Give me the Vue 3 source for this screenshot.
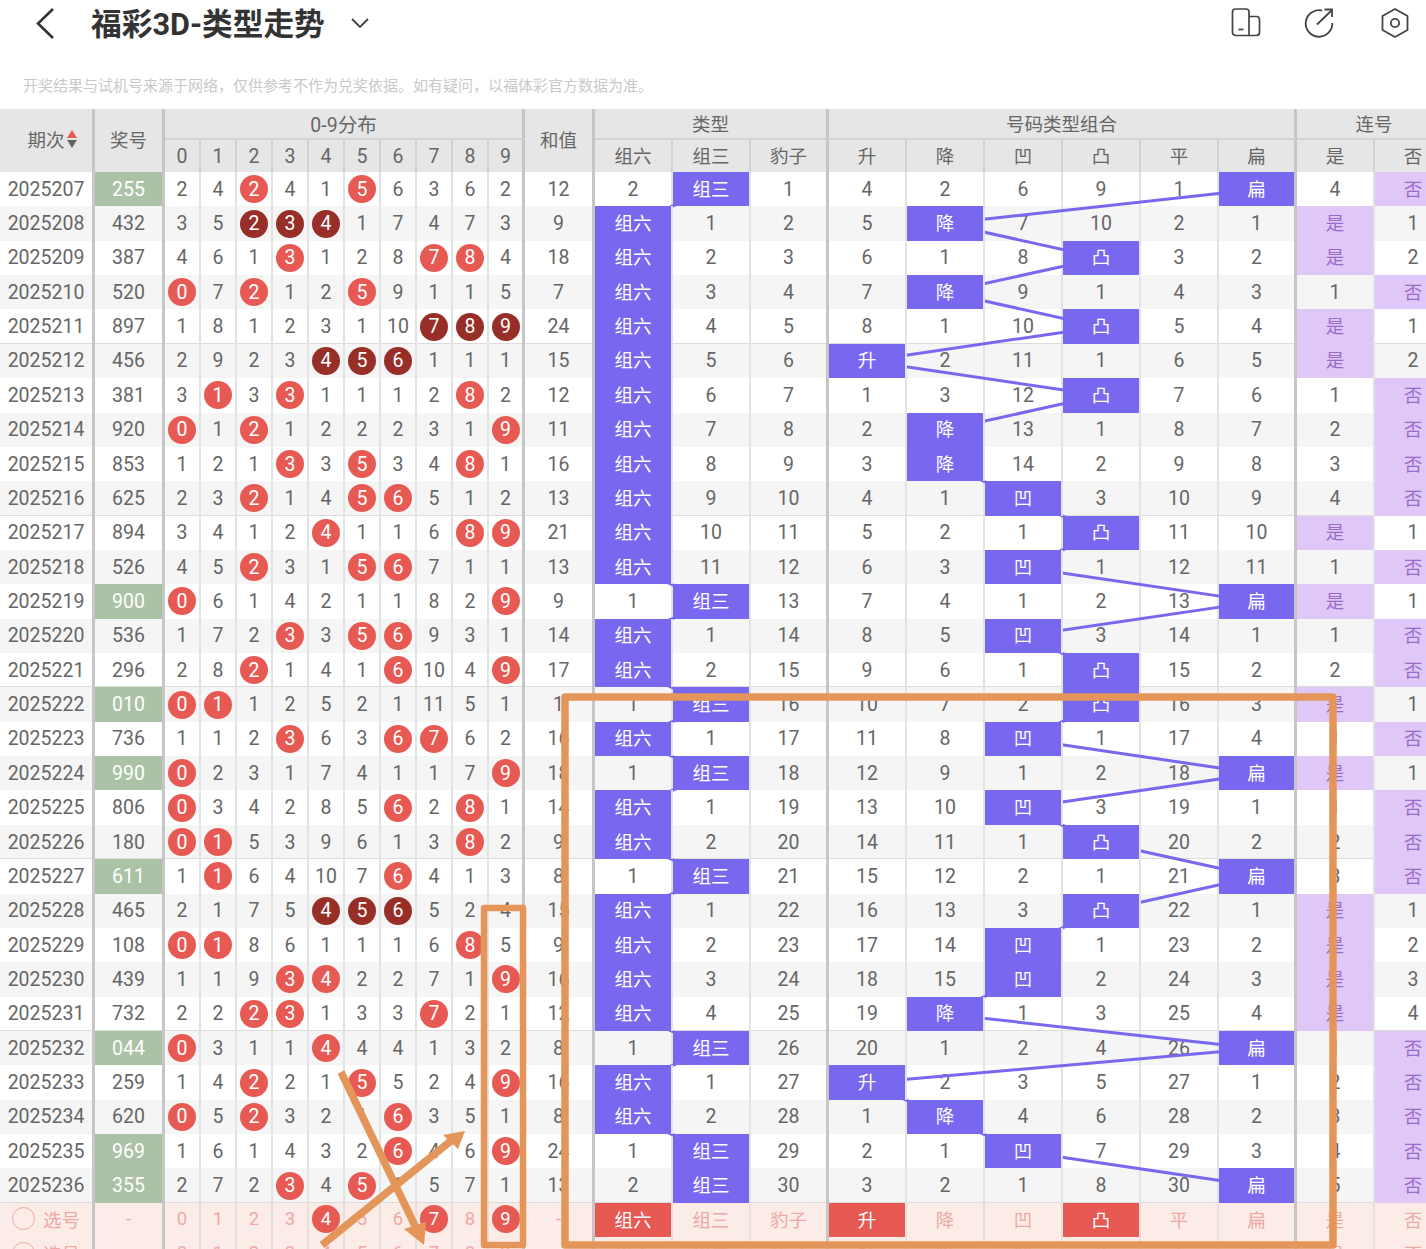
<script setup>
import { computed } from "vue";

const ROW_H = 34.37;
// 号码分布之后的几组列中心，画折线用
const TYPE_CX = [633, 711, 789];
const SHAPE_CX = [867, 945, 1023, 1101, 1179, 1257];

const draws = [
  "255", "432", "387", "520", "897", "456", "381", "920", "853", "625",
  "894", "526", "900", "536", "296", "010", "736", "990", "806", "180",
  "611", "465", "108", "439", "732", "044", "259", "620", "969", "355",
];

const typeNames = ["组六", "组三", "豹子"];
const shapeNames = ["升", "降", "凹", "凸", "平", "扁"];
const linkNames = ["是", "否"];

const typeOf = (d) => {
  const n = new Set(d).size;
  return n === 3 ? 0 : n === 2 ? 1 : 2;
};

const shapeOf = ([a, b, c]) => {
  if (a === b && b === c) return 4;
  if (a === b || b === c) return 5;
  if (a < b && b < c) return 0;
  if (a > b && b > c) return 1;
  return a > b ? 2 : 3;
};

const linkOf = ([a, b, c]) => {
  const near = (x, y) => [1, 9].includes(Math.abs(x - y));
  return near(a, b) || near(b, c) ? 0 : 1;
};

// 遗漏值一期一期往下累加
const step = (miss, hit) =>
  miss.map((m, i) => (i === hit ? 0 : m + 1));

const rows = computed(() => {
  let digitMiss = [1, 3, 0, 3, 0, 0, 5, 2, 5, 1];
  let typeMiss = [1, 0, 0];
  let shapeMiss = [3, 1, 5, 8, 0, 0];
  let linkMiss = [3, 0];

  return draws.map((prize, i) => {
    const nums = prize.split("").map(Number);
    const sorted = [...nums].sort((a, b) => a - b);
    const straight = sorted[1] === sorted[0] + 1 && sorted[2] === sorted[1] + 1;

    digitMiss = digitMiss.map((m, d) => (nums.includes(d) ? 0 : m + 1));
    const t = typeOf(nums);
    const s = shapeOf(nums);
    const l = linkOf(nums);
    typeMiss = step(typeMiss, t);
    shapeMiss = step(shapeMiss, s);
    linkMiss = step(linkMiss, l);

    return {
      period: 2025207 + i,
      prize,
      pair: t === 1,
      straight,
      digits: digitMiss.map((m, d) => ({ d, hit: nums.includes(d), text: nums.includes(d) ? d : m })),
      sum: nums.reduce((a, b) => a + b, 0),
      type: t,
      typeMiss: [...typeMiss],
      shape: s,
      shapeMiss: [...shapeMiss],
      link: l,
      linkMiss: [...linkMiss],
    };
  });
});

const polyline = (cols, key) =>
  rows.value
    .map((r, i) => `${cols[r[key]]},${(i + 0.5) * ROW_H}`)
    .join(" ");

const typeLine = computed(() => polyline(TYPE_CX, "type"));
const shapeLine = computed(() => polyline(SHAPE_CX, "shape"));

const pickRows = [
  { hits: [4, 7, 9], type: 0, shape: [0, 3] },
  { hits: [], type: -1, shape: [] },
];
</script>

<template>
  <div class="page">
    <header class="topbar">
      <svg class="back" width="24" height="32" viewBox="0 0 24 32">
        <path d="M20 2 L5 16.5 L20 31" fill="none" stroke="#333" stroke-width="2.6" />
      </svg>
      <h1 class="title">福彩3D-类型走势</h1>
      <svg class="caret" width="20" height="12" viewBox="0 0 20 12">
        <path d="M2 2 L10 10 L18 2" fill="none" stroke="#444" stroke-width="1.8" />
      </svg>
      <div class="actions">
        <svg width="30" height="30" viewBox="0 0 30 30">
          <path d="M18 27.5 H4.5 a3 3 0 0 1 -3 -3 V4 a3 3 0 0 1 3 -3 H15 a3 3 0 0 1 3 3 Z" fill="none" stroke="#444" stroke-width="1.7" />
          <path d="M18 8.5 H25.5 a3 3 0 0 1 3 3 V24.5 a3 3 0 0 1 -3 3 H18" fill="none" stroke="#444" stroke-width="1.7" />
          <path d="M7.5 21.5 H12.5" stroke="#444" stroke-width="1.7" />
        </svg>
        <svg width="30" height="32" viewBox="0 0 30 32">
          <path d="M18 3.5 A13.3 13.3 0 1 0 28.3 16" fill="none" stroke="#444" stroke-width="1.8" />
          <path d="M13 17.5 L27.5 3.5 M20.5 2.5 H28 V10" fill="none" stroke="#444" stroke-width="1.8" />
        </svg>
        <svg class="gear" width="30" height="32" viewBox="0 0 30 32">
          <path d="M15 2 L27.5 9 V23 L15 30 L2.5 23 V9 Z" fill="none" stroke="#444" stroke-width="1.8" stroke-linejoin="round" />
          <circle cx="15" cy="16" r="4.2" fill="none" stroke="#444" stroke-width="1.8" />
        </svg>
      </div>
    </header>

    <p class="notice">开奖结果与试机号来源于网络，仅供参考不作为兑奖依据。如有疑问，以福体彩官方数据为准。</p>

    <div class="table">
      <div class="grid head">
        <div class="th tall thick sortable">
          期次
          <span class="sort"><i class="up"></i><i class="down"></i></span>
        </div>
        <div class="th tall thick">奖号</div>
        <div class="th span-10 thick top wide">0-9分布</div>
        <div class="th tall thick">和值</div>
        <div class="th span-3 thick top">类型</div>
        <div class="th span-6 thick top">号码类型组合</div>
        <div class="th span-2 top">连号</div>
        <div v-for="d in 10" :key="d" class="th num" :class="{ thick: d === 10 }">{{ d - 1 }}</div>
        <div v-for="(n, i) in typeNames" :key="n" class="th" :class="{ thick: i === 2 }">{{ n }}</div>
        <div v-for="(n, i) in shapeNames" :key="n" class="th" :class="{ thick: i === 5 }">{{ n }}</div>
        <div v-for="n in linkNames" :key="n" class="th">{{ n }}</div>
      </div>

      <div class="body">
        <div
          v-for="(r, i) in rows"
          :key="r.period"
          class="grid row"
          :class="{ even: i % 2 === 1, fifth: i % 5 === 4 }"
        >
          <div class="td thick">{{ r.period }}</div>
          <div class="td thick" :class="{ pair: r.pair }">{{ r.prize }}</div>
          <div v-for="c in r.digits" :key="c.d" class="td" :class="{ thick: c.d === 9 }">
            <span v-if="c.hit" class="ball" :class="{ dark: r.straight }">{{ c.text }}</span>
            <template v-else>{{ c.text }}</template>
          </div>
          <div class="td thick">{{ r.sum }}</div>
          <div
            v-for="(m, t) in r.typeMiss"
            :key="'t' + t"
            class="td"
            :class="{ thick: t === 2, hit: t === r.type }"
          >{{ t === r.type ? typeNames[t] : m }}</div>
          <div
            v-for="(m, s) in r.shapeMiss"
            :key="'s' + s"
            class="td"
            :class="{ thick: s === 5, hit: s === r.shape }"
          >{{ s === r.shape ? shapeNames[s] : m }}</div>
          <div
            v-for="(m, l) in r.linkMiss"
            :key="'l' + l"
            class="td"
            :class="{ soft: l === r.link }"
          >{{ l === r.link ? linkNames[l] : m }}</div>
        </div>

        <svg class="trend" width="1426" height="1032">
          <polyline :points="typeLine" fill="none" stroke="#7868f0" stroke-width="3" />
          <polyline :points="shapeLine" fill="none" stroke="#7868f0" stroke-width="3" />
        </svg>

        <div v-for="(p, i) in pickRows" :key="i" class="grid row pick">
          <div class="td thick pick-label"><span class="radio"></span>选号</div>
          <div class="td thick">-</div>
          <div v-for="d in 10" :key="d" class="td" :class="{ thick: d === 10 }">
            <span v-if="p.hits.includes(d - 1)" class="ball">{{ d - 1 }}</span>
            <template v-else>{{ d - 1 }}</template>
          </div>
          <div class="td thick">-</div>
          <div v-for="(n, t) in typeNames" :key="n" class="td" :class="{ thick: t === 2, on: t === p.type }">{{ n }}</div>
          <div v-for="(n, s) in shapeNames" :key="n" class="td" :class="{ thick: s === 5, on: p.shape.includes(s) }">{{ n }}</div>
          <div v-for="n in linkNames" :key="n" class="td">{{ n }}</div>
        </div>
      </div>
    </div>

    <!-- 截图上的手绘标注 -->
    <svg class="marks" width="1426" height="1249" viewBox="0 0 1426 1249">
      <g fill="none" stroke="#e4965a" stroke-linejoin="round">
        <rect x="565" y="697" width="768" height="548" stroke-width="7.5" />
        <rect x="484" y="908" width="39" height="337" stroke-width="6.5" />
        <path d="M341 1072 L418 1232" stroke-width="7.5" />
        <path d="M322 1245 L452 1140" stroke-width="7.5" />
      </g>
      <g fill="#e4965a">
        <polygon points="424,1245 404,1229 426,1222" />
        <polygon points="465,1131 443,1135 458,1149" />
      </g>
    </svg>
  </div>
</template>

<style scoped>
.page {
  position: relative;
  width: 1426px;
  height: 1249px;
  overflow: hidden;
  background: #fff;
  font-family: Roboto, "Noto Sans CJK SC", sans-serif;
  color: #666;
}

.topbar {
  display: flex;
  align-items: center;
  height: 45px;
  padding-left: 33px;
  padding-right: 16px;
}

.back {
  margin-right: 34px;
}

.title {
  margin: 0 0 2px;
  font-size: 30.7px;
  font-weight: 700;
  color: #333;
  font-family: Roboto, "Noto Sans CJK SC", sans-serif;
}

.caret {
  margin-left: 25px;
}

.actions {
  margin-left: auto;
  display: flex;
  align-items: center;
  gap: 43px;
}

.gear {
  margin-left: 3px;
}

.notice {
  margin: 0;
  padding: 31px 0 0 23px;
  height: 64px;
  box-sizing: border-box;
  font-size: 15px;
  line-height: 20px;
  color: #c9c9c9;
}

.grid {
  display: grid;
  grid-template-columns: 95px 70px repeat(10, 36px) 70px repeat(3, 78px) repeat(6, 78px) repeat(2, 78px);
  width: 1453px;
}

.head {
  grid-template-rows: 31px 32px;
  background: #e6e6e6;
  font-size: 18.5px;
}

.th {
  display: flex;
  align-items: center;
  justify-content: center;
  box-sizing: border-box;
  padding-bottom: 3px;
  border-right: 2px solid #d2d2d2;
  color: #666;
}

.th.num {
  padding-bottom: 0;
  font-size: 19.5px;
}

.th.wide {
  font-size: 19.5px;
}

.th.sortable {
  padding-left: 12px;
}

.th.top {
  padding-bottom: 1px;
  border-bottom: 2px solid #d2d2d2;
}

.th.thick,
.td.thick {
  border-right: 3px solid #c6c6c6;
}

.tall {
  grid-row: span 2;
}

.span-10 {
  grid-column: span 10;
}

.span-6 {
  grid-column: span 6;
}

.span-3 {
  grid-column: span 3;
}

.span-2 {
  grid-column: span 2;
}

.sort {
  display: inline-flex;
  flex-direction: column;
  gap: 2px;
  margin-left: 2px;
}

.sort i {
  display: block;
  width: 0;
  height: 0;
  border-left: 5px solid transparent;
  border-right: 5px solid transparent;
}

.sort .up {
  border-bottom: 8px solid #e75a54;
}

.sort .down {
  border-top: 8px solid #666;
}

.body {
  position: relative;
}

.row {
  height: 34.37px;
  background: #fff;
  font-size: 19.5px;
}

.row.even {
  background: #f5f5f5;
}

.row.fifth {
  box-shadow: inset 0 -1px 0 #dcdcdc;
}

.td {
  display: flex;
  align-items: center;
  justify-content: center;
  box-sizing: border-box;
  border-right: 2px solid #e3e3e3;
  color: #666;
  white-space: nowrap;
}

.td.pair {
  background: #abc2a6;
  color: #fff;
}

.td.hit {
  position: relative;
  z-index: 2;
  padding-bottom: 3px;
  background: #7868f0;
  color: #fff;
  font-size: 18.5px;
}

.td.soft {
  padding-bottom: 3px;
  background: #dfc8f7;
  color: #9b6bcc;
  font-size: 18.5px;
}

.ball {
  display: flex;
  align-items: center;
  justify-content: center;
  width: 28px;
  height: 28px;
  border-radius: 50%;
  background: #e75a54;
  color: #fff;
}

.ball.dark {
  background: #972f28;
}

.trend {
  position: absolute;
  left: 0;
  top: 0;
  z-index: 1;
  pointer-events: none;
}

.row.pick {
  background: #fcece8;
  font-size: 18.5px;
}

.pick .td {
  padding-bottom: 2px;
  color: #eda9a5;
  border-right-color: #e8dfdc;
}

.pick .td.thick {
  border-right-color: #c6c6c6;
}

.pick .td.on {
  background: #e75a54;
  color: #fff;
}

.pick-label {
  gap: 8px;
}

.radio {
  width: 23px;
  height: 23px;
  box-sizing: border-box;
  border: 1.5px solid #eda9a5;
  border-radius: 50%;
}

.marks {
  position: absolute;
  left: 0;
  top: 0;
  z-index: 5;
  pointer-events: none;
}
</style>

<style>
html,
body {
  margin: 0;
  overflow: hidden;
}
</style>
